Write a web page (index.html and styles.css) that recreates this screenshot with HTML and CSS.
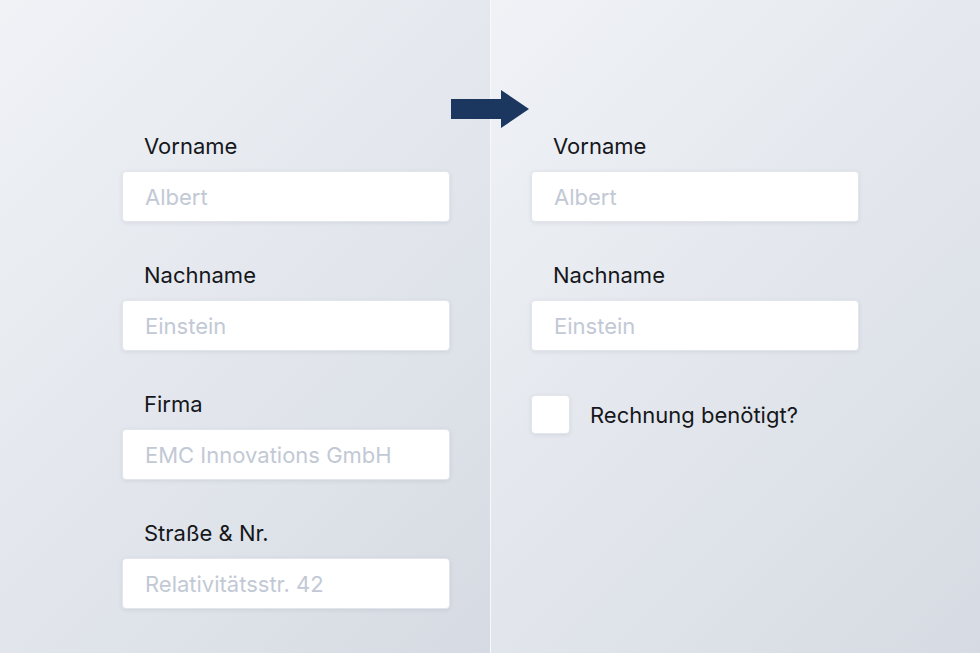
FILE: index.html
```html
<!DOCTYPE html>
<html lang="de">
  <head>
    <title>Formular vorher / nachher</title>
    <meta charset="UTF-8">
    <meta name="viewport" content="width=device-width, initial-scale=1.0">
    <link rel="stylesheet" href="styles.css">
  </head>
  <body>
    <div id="stage">
      <div class="panel panel-left">
        <div class="form">
          <div class="field">
            <label class="label">Vorname</label>
            <div class="input">Albert</div>
          </div>
          <div class="field">
            <label class="label">Nachname</label>
            <div class="input">Einstein</div>
          </div>
          <div class="field">
            <label class="label">Firma</label>
            <div class="input">EMC Innovations GmbH</div>
          </div>
          <div class="field">
            <label class="label">Straße &amp; Nr.</label>
            <div class="input">Relativitätsstr. 42</div>
          </div>
        </div>
      </div>
      <div class="divider"></div>
      <div class="panel panel-right">
        <div class="form">
          <div class="field">
            <label class="label">Vorname</label>
            <div class="input">Albert</div>
          </div>
          <div class="field">
            <label class="label">Nachname</label>
            <div class="input">Einstein</div>
          </div>
          <div class="check-row">
            <span class="checkbox"></span>
            <span class="check-label">Rechnung benötigt?</span>
          </div>
        </div>
      </div>
      <svg class="arrow" width="78" height="38" viewBox="0 0 78 38">
        <polygon points="0,9 50,9 50,0 78,19 50,38 50,29 0,29" fill="#1b365f"/>
      </svg>
    </div>
  </body>
</html>
```

FILE: styles.css
```css
* { box-sizing:border-box; margin:0; padding:0; }
html, body
{
    width:980px; height:653px; overflow:hidden;
}
body
{
    font-family:"Inter", "DejaVu Sans", sans-serif;
    color:#16181c;
    background-color:#e4e8ee;
}
#stage
{
    position:relative;
    display:flex;
    width:980px; height:653px;
}
.panel
{
    height:653px;
    padding-top:131px;
    background:linear-gradient(135deg, #f0f2f6 0%, #e3e7ed 50%, #d6dbe3 100%);
}
.panel-left  { width:490px; padding-left:122px; }
.panel-right { width:489px; padding-left:40px; }
.divider
{
    width:1px; height:653px;
    background-color:#f7f8fa;
}
.form
{
    width:328px;
    display:flex;
    flex-direction:column;
    gap:38px;
}
.field
{
    display:flex;
    flex-direction:column;
    gap:10px;
}
.label
{
    display:block;
    padding-left:22px;
    font-size:22px;
    line-height:30px;
    color:#15171b;
}
.input
{
    height:51px;
    padding:0 22px;
    display:flex;
    align-items:center;
    font-size:22px;
    color:#c2c9d5;
    background-color:#fff;
    border:1px solid #e2e6ec;
    border-radius:4px;
    box-shadow:0 1px 4px rgba(60,70,90,0.10);
}
.check-row
{
    display:flex;
    align-items:center;
    gap:20px;
    margin-top:6px;
}
.checkbox
{
    width:39px; height:39px;
    background-color:#fff;
    border:1px solid #e2e6ec;
    border-radius:4px;
    box-shadow:0 1px 4px rgba(60,70,90,0.10);
}
.check-label
{
    font-size:22px;
    color:#15171b;
}
.arrow
{
    position:absolute;
    left:451px; top:90px;
}
```
